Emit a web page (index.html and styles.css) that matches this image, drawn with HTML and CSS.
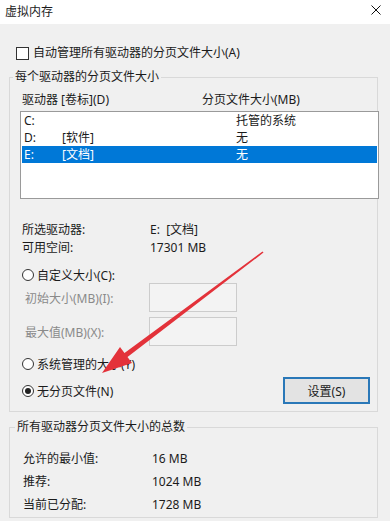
FILE: index.html
```html
<!DOCTYPE html>
<html lang="zh-CN">
<head>
    <meta charset="UTF-8">
    <meta name="viewport" content="width=device-width, initial-scale=1.0">
    <title>虚拟内存</title>
    <link rel="stylesheet" href="styles.css">
</head>
<body>
    <div class="window">
        <div class="titlebar">
            <span>虚拟内存</span>
            <svg class="close" width="10" height="10" viewBox="0 0 10 10">
                <path d="M0.5 0.5 L9.5 9.5 M9.5 0.5 L0.5 9.5" stroke="#111" stroke-width="1" fill="none"/>
            </svg>
        </div>
        <div class="content">
            <div class="auto-row">
                <span class="checkbox"></span>
                <span>自动管理所有驱动器的分页文件大小(A)</span>
            </div>

            <div class="group group-drives">
                <div class="group-title">每个驱动器的分页文件大小</div>
                <div class="list-header">
                    <span class="col-drive">驱动器 [卷标](D)</span>
                    <span>分页文件大小(MB)</span>
                </div>
                <div class="listbox">
                    <div class="list-row">
                        <span class="col-letter">C:</span>
                        <span class="col-label"></span>
                        <span>托管的系统</span>
                    </div>
                    <div class="list-row">
                        <span class="col-letter">D:</span>
                        <span class="col-label">[软件]</span>
                        <span>无</span>
                    </div>
                    <div class="list-row selected">
                        <span class="col-letter">E:</span>
                        <span class="col-label">[文档]</span>
                        <span>无</span>
                    </div>
                </div>

                <div class="info">
                    <div class="info-row"><span class="info-label">所选驱动器:</span><span>E:&nbsp;&nbsp;[文档]</span></div>
                    <div class="info-row"><span class="info-label">可用空间:</span><span>17301 MB</span></div>
                </div>

                <div class="radio-row custom">
                    <span class="radio"></span>
                    <span>自定义大小(C):</span>
                </div>
                <div class="field-row first">
                    <span class="field-label">初始大小(MB)(I):</span>
                    <span class="field-box"></span>
                </div>
                <div class="field-row">
                    <span class="field-label">最大值(MB)(X):</span>
                    <span class="field-box"></span>
                </div>
                <div class="radio-row system">
                    <span class="radio"></span>
                    <span>系统管理的大小(Y)</span>
                </div>
                <div class="radio-row none-row">
                    <span class="radio checked"></span>
                    <span>无分页文件(N)</span>
                    <button class="set-btn">设置(S)</button>
                </div>
            </div>

            <div class="group group-total">
                <div class="group-title">所有驱动器分页文件大小的总数</div>
                <div class="total-rows">
                    <div class="total-row"><span class="total-label">允许的最小值:</span><span>16 MB</span></div>
                    <div class="total-row"><span class="total-label">推荐:</span><span>1024 MB</span></div>
                    <div class="total-row"><span class="total-label">当前已分配:</span><span>1728 MB</span></div>
                </div>
            </div>
        </div>

        <!-- red annotation arrow drawn over the dialog -->
        <svg class="arrow" width="390" height="521" viewBox="0 0 390 521">
            <polygon points="262.5,251.4 124.5,353 120,347 102,373 132,363 127.5,357 263.5,252.6" fill="#e3323a"/>
        </svg>
    </div>
</body>
</html>
```

FILE: styles.css
```css
body {
    margin: 0;
    font-family: "Segoe UI", "Noto Sans", "Noto Sans CJK SC", sans-serif;
    font-size: 12px;
    color: #1b1b1b;
    background-color: #f0f0f0;
}
.window {
    position: relative;
    width: 390px;
    height: 521px;
    overflow: hidden;
    background-color: #f0f0f0;
}
.titlebar {
    height: 24px;
    line-height: 24px;
    padding: 0 9px 0 5px;
    background-color: #fff;
    display: flex;
    justify-content: space-between;
    align-items: center;
}
.close {
    display: block;
    margin-bottom: 4px;
}
.content {
    padding: 0 12px 0 9px;
}
.auto-row {
    margin-top: 21px;
    height: 16px;
    line-height: 16px;
    display: flex;
    align-items: center;
    padding-left: 7px;
}
.checkbox {
    width: 11px;
    height: 11px;
    border: 1px solid #333;
    background: #fff;
    margin-right: 4px;
}
.group {
    border: 1px solid #d9d9d9;
    padding: 0 0 0 12px;
}
.group-title {
    display: table;
    margin: -9px 0 0 -9px;
    padding: 0 2px;
    line-height: 16px;
    background-color: #f0f0f0;
}
.group-drives {
    margin-top: 16px;
    padding-bottom: 7px;
}
.list-header {
    display: flex;
    margin-top: 7px;
    line-height: 16px;
}
.col-drive {
    width: 180px;
}
.listbox {
    margin: 3px -2px 0 -2px;
    height: 86px;
    border: 1px solid #9a9a9a;
    background: #fff;
}
.list-row {
    display: flex;
    height: 17px;
    line-height: 17px;
    margin: 0 1px;
    padding-left: 2px;
}
.list-row.selected {
    background-color: #0078d7;
    color: #fff;
}
.col-letter {
    width: 38px;
}
.col-label {
    width: 174px;
}
.info {
    margin-top: 22px;
}
.info-row {
    display: flex;
    line-height: 18px;
}
.info-label {
    width: 128px;
}
.radio-row {
    display: flex;
    align-items: center;
    height: 16px;
}
.radio-row.custom {
    margin-top: 10px;
}
.radio-row.system {
    margin-top: 10px;
}
.radio-row.none-row {
    margin-top: 5px;
    height: 27px;
}
.radio {
    box-sizing: border-box;
    width: 12px;
    height: 12px;
    border: 1px solid #333;
    border-radius: 50%;
    background: #fff;
    margin-right: 3px;
    display: flex;
    align-items: center;
    justify-content: center;
}
.radio.checked::after {
    content: "";
    width: 6px;
    height: 6px;
    border-radius: 50%;
    background: #222;
}
.field-row {
    display: flex;
    align-items: center;
    margin-top: 5px;
    height: 29px;
}
.field-row.first {
    margin-top: 0;
}
.field-label {
    width: 124px;
    padding-left: 3px;
    color: #8a8a8a;
}
.field-box {
    box-sizing: border-box;
    width: 88px;
    height: 29px;
    border: 1px solid #cccccc;
    background: #f3f3f3;
}
.set-btn {
    margin-left: auto;
    margin-right: 7px;
    box-sizing: border-box;
    width: 87px;
    height: 27px;
    border: 2px solid #2a78b8;
    background: #e3e3e3;
    font: inherit;
    color: #1b1b1b;
    padding: 0;
}
.group-total {
    margin-top: 15px;
    padding-bottom: 1px;
}
.group-total .group-title {
    margin-left: -7px;
}
.total-rows {
    margin-top: 12px;
}
.total-row {
    display: flex;
    line-height: 23px;
    padding-left: 1px;
}
.total-label {
    width: 129px;
}
.arrow {
    position: absolute;
    top: 0;
    left: 0;
    pointer-events: none;
}
```
